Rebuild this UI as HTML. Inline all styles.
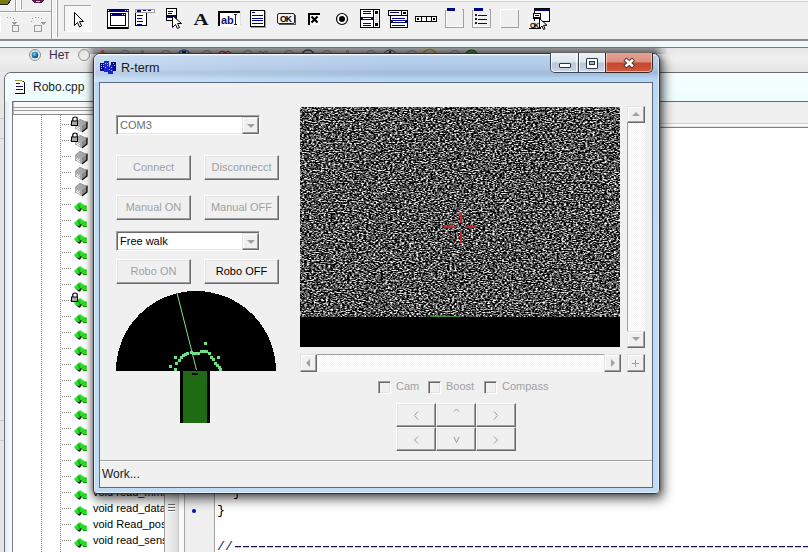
<!DOCTYPE html>
<html><head><meta charset="utf-8">
<style>
*{margin:0;padding:0;box-sizing:border-box}
html,body{width:808px;height:552px;overflow:hidden;background:#f0f0f0;font-family:"Liberation Sans",sans-serif;position:relative}
.a{position:absolute}
.btn{position:absolute;background:#f0f0f0;border-top:1px solid #fff;border-left:1px solid #fff;border-right:1px solid #696969;border-bottom:1px solid #696969;box-shadow:inset -1px -1px 0 #a0a0a0;font-size:11px;color:#a0a0a0;text-align:center;text-shadow:1px 1px 0 #fff}
.combo{position:absolute;background:#fff;border-top:1px solid #a0a0a0;border-left:1px solid #a0a0a0;border-right:1px solid #fff;border-bottom:1px solid #fff;box-shadow:inset 1px 1px 0 #696969,inset -1px -1px 0 #e3e3e3;font-size:11px}
</style></head><body>

<!-- toolbar -->
<div class="a" style="left:0;top:0;width:808px;height:40px;background:#f0f0f0"></div>
<div class="a" style="left:0;top:39px;width:808px;height:2px;background:#8a8a8a"></div>
<div class="a" style="left:0;top:41px;width:808px;height:6px;background:#eef9fb"></div>
<div class="a" style="left:0;top:47px;width:808px;height:1px;background:#7a7a7a"></div>
<div class="a" style="left:0;top:48px;width:808px;height:24px;background:#ececec"></div>


<!-- toolbar content -->
<div class="a" style="left:118px;top:0;width:690px;height:2px;background:#fbfbfb;border-bottom:1px solid #d0d0d0"></div>
<svg class="a" style="left:0;top:0" width="560" height="40" viewBox="0 0 560 40" shape-rendering="crispEdges">
<!-- left bits -->
<path d="M0 0h11l-3 4H0z" fill="#7c7a0c"/><path d="M11 0l-3 4H0" fill="none" stroke="#222" stroke-width="1"/>
<path d="M31 0h13l-3 3h-7z" fill="#5a1a4a"/><path d="M35 1h5l-1 1h-3z" fill="#e0d0e0"/>
<rect x="15" y="0" width="1" height="11" fill="#a0a0a0"/><rect x="16" y="0" width="1" height="11" fill="#fff"/>
<rect x="20" y="0" width="1" height="9" fill="#fff"/><rect x="21" y="0" width="1" height="9" fill="#a0a0a0"/>
<rect x="0" y="11" width="52" height="1" fill="#a0a0a0"/><rect x="0" y="12" width="52" height="1" fill="#fff"/>
<rect x="51" y="0" width="1" height="39" fill="#a0a0a0"/><rect x="52" y="0" width="1" height="39" fill="#fff"/>
<rect x="56" y="0" width="1" height="37" fill="#fff"/><rect x="57" y="0" width="1" height="37" fill="#a0a0a0"/>
<rect x="0" y="16" width="1" height="16" fill="#fff"/>
<!-- undo/redo -->
<g fill="#9a9a9a">
<rect x="7" y="17" width="1" height="1"/><rect x="10" y="17" width="1" height="1"/><rect x="13" y="18" width="1" height="1"/><rect x="14" y="20" width="1" height="1"/>
<path d="M12 22h5l-2.5 3z"/><rect x="12" y="25" width="7" height="7"/>
<rect x="31" y="21" width="1" height="1"/><rect x="32" y="18" width="1" height="1"/><rect x="35" y="17" width="1" height="1"/><rect x="38" y="17" width="1" height="1"/><rect x="41" y="18" width="1" height="1"/>
<path d="M41 22h5l-2.5 3z"/><rect x="34" y="25" width="8" height="7"/>
</g>
<rect x="13" y="26" width="5" height="5" fill="#efefef"/><rect x="35" y="26" width="6" height="5" fill="#efefef"/>
<!-- pointer button -->
<rect x="64" y="5" width="28" height="27" fill="#f6f6f6"/>
<rect x="64" y="5" width="28" height="1" fill="#a8a8a8"/><rect x="64" y="5" width="1" height="27" fill="#a8a8a8"/>
<rect x="64" y="31" width="28" height="1" fill="#fff"/><rect x="91" y="5" width="1" height="27" fill="#fff"/>
<path d="M74.5 12.5v13l3-3 2 4.5 2-1-2-4.5h4z" fill="#fff" stroke="#000" stroke-width="1" shape-rendering="auto"/>
<!-- window -->
<rect x="107" y="9" width="22" height="20" fill="#000"/><rect x="108" y="10" width="20" height="2" fill="#000080"/>
<rect x="108" y="10" width="1" height="1" fill="#fff"/><rect x="125" y="10" width="1" height="1" fill="#fff"/><rect x="127" y="10" width="1" height="1" fill="#fff"/>
<rect x="108" y="12" width="20" height="15" fill="#fff"/><rect x="110" y="13" width="16" height="13" fill="#000"/>
<rect x="111" y="14" width="14" height="2" fill="#000080"/><rect x="111" y="16" width="14" height="9" fill="#fff"/>
<rect x="111" y="14" width="1" height="1" fill="#fff"/><rect x="122" y="14" width="1" height="1" fill="#fff"/><rect x="124" y="14" width="1" height="1" fill="#fff"/>
<rect x="128" y="10" width="1" height="19" fill="#404040"/>
<!-- menu -->
<rect x="135" y="9" width="20" height="4" fill="#a0a0a0"/><rect x="136" y="10" width="18" height="2" fill="#fff"/>
<rect x="137" y="10" width="4" height="2" fill="#000080"/><rect x="143" y="10" width="3" height="1" fill="#000080"/><rect x="148" y="10" width="3" height="1" fill="#000080"/>
<rect x="135" y="13" width="12" height="13" fill="#000"/><rect x="136" y="13" width="10" height="12" fill="#fff"/>
<rect x="137" y="15" width="6" height="1" fill="#000080"/><rect x="137" y="18" width="5" height="1" fill="#000080"/><rect x="137" y="21" width="6" height="1" fill="#000080"/><rect x="137" y="24" width="5" height="1" fill="#000080"/>
<!-- popup -->
<rect x="166" y="8" width="11" height="13" fill="#000"/><rect x="167" y="9" width="9" height="11" fill="#fff"/>
<rect x="168" y="11" width="5" height="1" fill="#000080"/><rect x="168" y="13" width="4" height="1" fill="#000080"/><rect x="167" y="15" width="9" height="3" fill="#000080"/>
<path d="M172.5 15.5v12l3-3 2 4 2-1-2-4h4z" fill="#fff" stroke="#000" stroke-width="1" shape-rendering="auto"/>
<!-- A -->
<text x="0" y="25" transform="translate(193.5 0) scale(1.3 1)" font-family="Liberation Serif" font-weight="bold" font-size="16" fill="#111" shape-rendering="auto">A</text>
<!-- edit -->
<rect x="218" y="11" width="22" height="15" fill="#000"/><rect x="220" y="13" width="21" height="14" fill="#fff"/>
<rect x="240" y="11" width="1" height="15" fill="#e0e0e0"/>
<text x="221" y="24" font-family="Liberation Sans" font-weight="bold" font-size="11" fill="#101070" shape-rendering="auto">ab</text>
<path d="M234 14h3M235.5 14v10M234 24h3" stroke="#222" stroke-width="1"/>
<!-- memo -->
<rect x="250" y="10" width="15" height="17" fill="#000"/><rect x="251" y="11" width="13" height="15" fill="#fff"/>
<rect x="265" y="11" width="1" height="17" fill="#a0a0a0"/><rect x="251" y="27" width="15" height="1" fill="#a0a0a0"/>
<rect x="252" y="12" width="3" height="1" fill="#000080"/>
<rect x="252" y="15" width="11" height="1" fill="#000080"/><rect x="252" y="18" width="11" height="1" fill="#000080"/><rect x="252" y="20" width="11" height="1" fill="#000080"/><rect x="252" y="23" width="11" height="1" fill="#000080"/>
<!-- OK -->
<rect x="277.5" y="13.5" width="17" height="10" rx="1.5" fill="#f2f2f2" stroke="#222" stroke-width="1" shape-rendering="auto"/>
<path d="M279 24.5h16.5V15" fill="none" stroke="#555" stroke-width="1"/>
<text x="280" y="22" font-family="Liberation Sans" font-weight="bold" font-size="8.5" fill="#000" shape-rendering="auto" textLength="12">OK</text>
<!-- checkbox -->
<rect x="308" y="13" width="12" height="12" fill="#fff"/><rect x="308" y="13" width="12" height="2" fill="#000"/><rect x="308" y="13" width="2" height="12" fill="#000"/>
<path d="M311.5 16.5l6 6M317.5 16.5l-6 6" stroke="#000" stroke-width="2.2" shape-rendering="auto"/>
<!-- radio -->
<circle cx="342" cy="19" r="5.5" fill="#fff" stroke="#000" stroke-width="1.2" shape-rendering="auto"/><circle cx="342" cy="19" r="3" fill="#000" shape-rendering="auto"/>
<!-- listbox -->
<rect x="360" y="9" width="20" height="19" fill="#000"/><rect x="361" y="10" width="12" height="17" fill="#fff"/><rect x="374" y="10" width="5" height="17" fill="#fff"/>
<rect x="375" y="11" width="3" height="3" fill="#000"/><rect x="375" y="23" width="3" height="3" fill="#000"/><rect x="375" y="15" width="3" height="7" fill="#e0e0e0"/>
<rect x="363" y="11" width="8" height="1" fill="#000080"/><rect x="363" y="13" width="8" height="1" fill="#000080"/><rect x="361" y="17" width="13" height="3" fill="#000080"/><rect x="363" y="18" width="8" height="1" fill="#fff"/><rect x="363" y="23" width="8" height="1" fill="#000080"/><rect x="363" y="25" width="8" height="1" fill="#000080"/>
<!-- combobox -->
<rect x="388" y="10" width="20" height="6" fill="#000"/><rect x="389" y="11" width="12" height="4" fill="#fff"/><rect x="402" y="11" width="5" height="4" fill="#fff"/><rect x="403" y="12" width="3" height="2" fill="#000"/>
<rect x="390" y="12" width="9" height="1" fill="#000080"/>
<rect x="390" y="16" width="18" height="12" fill="#000"/><rect x="391" y="16" width="16" height="11" fill="#fff"/>
<rect x="392" y="18" width="13" height="1" fill="#000080"/><rect x="391" y="20" width="16" height="3" fill="#000080"/><rect x="393" y="21" width="12" height="1" fill="#fff"/><rect x="392" y="25" width="13" height="1" fill="#000080"/>
<!-- scrollbar -->
<rect x="415" y="16" width="22" height="6" fill="#000"/><rect x="416" y="17" width="20" height="4" fill="#fff"/>
<rect x="417" y="18" width="2" height="2" fill="#000"/><rect x="433" y="18" width="2" height="2" fill="#000"/><rect x="421" y="17" width="1" height="4" fill="#000"/><rect x="426" y="17" width="1" height="4" fill="#000"/><rect x="431" y="17" width="1" height="4" fill="#000"/>
<!-- groupbox -->
<path d="M445.5 9.5v18h18v-18h-2" fill="none" stroke="#a0a0a0"/><path d="M446.5 10.5v16h16" fill="none" stroke="#fff"/>
<rect x="447" y="8" width="8" height="3" fill="#000080"/>
<!-- radiogroup -->
<path d="M472.5 9.5v18h18v-18h-2" fill="none" stroke="#a0a0a0"/><path d="M473.5 10.5v16h16" fill="none" stroke="#fff"/>
<rect x="474" y="8" width="9" height="3" fill="#000080"/>
<rect x="475" y="14" width="2" height="2" fill="#222"/><rect x="475" y="18" width="2" height="2" fill="#222"/><rect x="475" y="22" width="2" height="2" fill="#222"/>
<rect x="478" y="15" width="9" height="1" fill="#000080"/><rect x="478" y="19" width="9" height="1" fill="#000080"/><rect x="478" y="23" width="9" height="1" fill="#000080"/>
<!-- panel -->
<path d="M500.5 27.5v-18h18" fill="none" stroke="#fff"/><path d="M500.5 27.5h18v-18" fill="none" stroke="#a0a0a0"/>
<!-- action -->
<rect x="534" y="8" width="16" height="14" fill="#000"/><rect x="535" y="9" width="14" height="2" fill="#000080"/><rect x="535" y="11" width="14" height="10" fill="#fff"/>
<rect x="533" y="13" width="8" height="6" fill="#000"/><rect x="534" y="14" width="6" height="4" fill="#fff"/><rect x="535" y="15" width="4" height="1" fill="#000080"/><rect x="534" y="17" width="6" height="1" fill="#000080"/>
<rect x="529" y="21" width="12" height="8" fill="#000"/><rect x="529" y="21" width="11" height="7" fill="#fff"/><rect x="530" y="22" width="9" height="5" fill="#eeeeee"/><text x="530" y="27.5" font-family="Liberation Sans" font-weight="bold" font-size="7" fill="#000" textLength="9" shape-rendering="auto">OK</text>
<path d="M539.5 18.5v10l2.5-2.5 1.5 3.5 1.5-.7-1.5-3.5h3.5z" fill="#fff" stroke="#000" stroke-width="1" shape-rendering="auto"/>
</svg>


<!-- radio row -->
<div class="a" style="left:0;top:48px;width:808px;height:24px;background:linear-gradient(#e6e6e6,#f0f0f0 40%,#e4e4e4)"></div>
<div class="a" style="left:84px;top:48px;width:584px;height:6px;background:linear-gradient(90deg,rgba(140,140,140,.0),rgba(140,140,140,.8) 10px,rgba(140,140,140,.8) 570px,rgba(140,140,140,0))"></div>
<svg class="a" style="left:0;top:48px" width="808" height="24" viewBox="0 48 808 24">
<defs><radialGradient id="rg1" cx=".4" cy=".35" r=".7"><stop offset="0" stop-color="#8fd0f0"/><stop offset=".5" stop-color="#1f82b8"/><stop offset="1" stop-color="#0d3f66"/></radialGradient>
<linearGradient id="rg0" x1="0" y1="0" x2="1" y2="1"><stop offset="0" stop-color="#d8d8d8"/><stop offset="1" stop-color="#fafafa"/></linearGradient></defs>
<circle cx="35" cy="55" r="5.5" fill="url(#rg0)" stroke="#8e8f8f" stroke-width="1"/>
<circle cx="35" cy="55" r="3.3" fill="url(#rg1)"/>
<circle cx="84" cy="55" r="5.5" fill="url(#rg0)" stroke="#8e8f8f" stroke-width="1"/>
<path d="M100 54l2.5-4 2.5 4M101 52h3" fill="none" stroke="#c03838" stroke-width="1"/>
<g fill="none" stroke="#6a6a6a" stroke-width="1">
<path d="M120 55a5 4.5 0 0 1 10 0M140.5 55l2-5 2 5M161 55a5 4.5 0 0 1 10 0M202 55a5 4.5 0 0 1 10 0M243 55a5 4.5 0 0 1 10 0M284 55a5 4.5 0 0 1 10 0M322 55a5 4.5 0 0 1 10 0M345.5 55l2-5 2 5M366 55a5 4.5 0 0 1 10 0M407 55a5 4.5 0 0 1 10 0M450 55a5 4.5 0 0 1 10 0"/>
<path d="M258 55l2-4 3 2 3-2 2 2 2 2"/>
</g>
<path d="M178 55a6 5 0 0 1 12 0" fill="none" stroke="#28508a" stroke-width="1.4"/><rect x="182" y="51" width="4" height="3" fill="#1a1a2a"/>
<path d="M302 55a6 5 0 0 1 12 0" fill="none" stroke="#303848" stroke-width="1.4"/>
<path d="M384 55a6 5 0 0 1 12 0" fill="none" stroke="#303848" stroke-width="1"/><rect x="389" y="51" width="2" height="3" fill="#202020"/>
<path d="M219 55a3 3 0 0 1 6-1a3 3 0 0 1 6 1" fill="none" stroke="#9a2030" stroke-width="1.2"/>
<path d="M423 55a6.5 5.5 0 0 1 13 0" fill="none" stroke="#8a7a10" stroke-width="1.6"/>
<path d="M465 56a6.5 6 0 0 1 13 0z" fill="#3a7a3a" stroke="#1a3a1a" stroke-width="1"/>
</svg>
<div class="a" style="left:49px;top:48px;font-size:12px;color:#3a2c48">Нет</div>

<!-- left behind window -->
<div class="a" style="left:0;top:73px;width:5px;height:479px;background:#e6e6e6"></div><div class="a" style="left:0;top:118px;width:4px;height:1px;background:#c8c8c8"></div><div class="a" style="left:0;top:138px;width:4px;height:1px;background:#c8c8c8"></div><div class="a" style="left:0;top:420px;width:4px;height:1px;background:#c8c8c8"></div><div class="a" style="left:0;top:440px;width:4px;height:1px;background:#c8c8c8"></div>
<!-- MDI child window -->
<div class="a" style="left:4px;top:72px;width:820px;height:500px;border-left:1px solid #707070;border-top:1px solid #6a6a6a;border-top-left-radius:7px;background:linear-gradient(90deg,#dfeefa,#f3fbff 6px,#f3fbff 8px,#e4f0fb)"></div>
<div class="a" style="left:5px;top:73px;width:810px;height:28px;border-top-left-radius:6px;background:linear-gradient(#f4feff,#effdff)"></div>
<!-- doc icon -->
<svg class="a" style="left:10px;top:76px" width="20" height="22" viewBox="10 76 20 22" shape-rendering="crispEdges">
<rect x="15" y="81" width="9" height="12" fill="#fff"/>
<rect x="15" y="80" width="7" height="1" fill="#9c9c3c"/><rect x="22" y="81" width="1" height="1" fill="#9c9c3c"/><rect x="23" y="81" width="1" height="1" fill="#222"/><rect x="24" y="82" width="1" height="1" fill="#222"/>
<rect x="24" y="83" width="1" height="11" fill="#000"/><rect x="15" y="93" width="10" height="1" fill="#000"/>
<rect x="16" y="83" width="4" height="1" fill="#16165a"/><rect x="16" y="86" width="7" height="1" fill="#16165a"/><rect x="16" y="89" width="7" height="1" fill="#16165a"/>
</svg>
<div class="a" style="left:33px;top:80px;font-size:12px;color:#1e1e1e">Robo.cpp</div>
<!-- editor header right -->
<div class="a" style="left:12px;top:101px;width:796px;height:1px;background:#6a6a6a"></div>
<div class="a" style="left:178px;top:102px;width:630px;height:21px;background:#f0f0f0"></div>
<div class="a" style="left:178px;top:123px;width:630px;height:4px;background:linear-gradient(#d0d0d0 1px,#fbfbfb 1px,#fbfbfb 3px,#e4e4e4 3px)"></div>
<div class="a" style="left:178px;top:127px;width:630px;height:1px;background:#808080"></div>
<div class="a" style="left:215px;top:128px;width:593px;height:424px;background:#fff"></div>
<!-- tree panel -->
<div class="a" style="left:12px;top:101px;width:160px;height:460px;background:#fff;border-left:1px solid #7a7a7a;border-top:1px solid #6a6a6a"></div>
<div class="a" style="left:13px;top:102px;width:160px;height:13px;background:#f8f8f8;border-bottom:1px solid #8a8a8a;border-left:1px solid #b8b8b8"></div>
<div class="a" style="left:13px;top:107px;width:160px;height:1px;background:#9a9a9a"></div>
<div class="a" style="left:13px;top:110px;width:160px;height:1px;background:#9a9a9a"></div>
<!-- tree content -->
<svg class="a" style="left:13px;top:115px" width="151" height="437" viewBox="13 115 151 437" shape-rendering="crispEdges">

<path d="M41.5 115V552M60.5 115V552" stroke="#808080" stroke-dasharray="1 1"/>
<path d="M62 124.5H71" stroke="#808080" stroke-dasharray="1 1"/>
<g transform="translate(0 0)" shape-rendering="auto"><path d="M75 123l5-4 7 3v6l-5 4-7-3z" fill="#ababab"/><path d="M82 126l5-4v6l-5 4z" fill="#8a8a8a"/><path d="M75.5 123l4.5-3.5 7 3" fill="none" stroke="#999" stroke-width="1"/><path d="M87 121.5v6.5l-5 4" fill="none" stroke="#111" stroke-width="1.3"/><path d="M76 127l4 3M80 127l-4 3M77 126l1 1" stroke="#f4f4f4" stroke-width="1"/></g>
<g transform="translate(0 0)" shape-rendering="auto"><path d="M72.8 121v-2.2a2.2 1.8 0 0 1 4.4 0V121" fill="none" stroke="#000" stroke-width="1.2"/><rect x="71.5" y="121" width="6" height="4.5" fill="#aaa" stroke="#000" stroke-width="1"/></g>
<path d="M62 140.5H71" stroke="#808080" stroke-dasharray="1 1"/>
<g transform="translate(0 16)" shape-rendering="auto"><path d="M75 123l5-4 7 3v6l-5 4-7-3z" fill="#ababab"/><path d="M82 126l5-4v6l-5 4z" fill="#8a8a8a"/><path d="M75.5 123l4.5-3.5 7 3" fill="none" stroke="#999" stroke-width="1"/><path d="M87 121.5v6.5l-5 4" fill="none" stroke="#111" stroke-width="1.3"/><path d="M76 127l4 3M80 127l-4 3M77 126l1 1" stroke="#f4f4f4" stroke-width="1"/></g>
<g transform="translate(0 16)" shape-rendering="auto"><path d="M72.8 121v-2.2a2.2 1.8 0 0 1 4.4 0V121" fill="none" stroke="#000" stroke-width="1.2"/><rect x="71.5" y="121" width="6" height="4.5" fill="#aaa" stroke="#000" stroke-width="1"/></g>
<path d="M62 156.5H71" stroke="#808080" stroke-dasharray="1 1"/>
<g transform="translate(0 32)" shape-rendering="auto"><path d="M75 123l5-4 7 3v6l-5 4-7-3z" fill="#ababab"/><path d="M82 126l5-4v6l-5 4z" fill="#8a8a8a"/><path d="M75.5 123l4.5-3.5 7 3" fill="none" stroke="#999" stroke-width="1"/><path d="M87 121.5v6.5l-5 4" fill="none" stroke="#111" stroke-width="1.3"/><path d="M76 127l4 3M80 127l-4 3M77 126l1 1" stroke="#f4f4f4" stroke-width="1"/></g>
<path d="M62 172.5H71" stroke="#808080" stroke-dasharray="1 1"/>
<g transform="translate(0 48)" shape-rendering="auto"><path d="M75 123l5-4 7 3v6l-5 4-7-3z" fill="#ababab"/><path d="M82 126l5-4v6l-5 4z" fill="#8a8a8a"/><path d="M75.5 123l4.5-3.5 7 3" fill="none" stroke="#999" stroke-width="1"/><path d="M87 121.5v6.5l-5 4" fill="none" stroke="#111" stroke-width="1.3"/><path d="M76 127l4 3M80 127l-4 3M77 126l1 1" stroke="#f4f4f4" stroke-width="1"/></g>
<path d="M62 188.5H71" stroke="#808080" stroke-dasharray="1 1"/>
<g transform="translate(0 64)" shape-rendering="auto"><path d="M75 123l5-4 7 3v6l-5 4-7-3z" fill="#ababab"/><path d="M82 126l5-4v6l-5 4z" fill="#8a8a8a"/><path d="M75.5 123l4.5-3.5 7 3" fill="none" stroke="#999" stroke-width="1"/><path d="M87 121.5v6.5l-5 4" fill="none" stroke="#111" stroke-width="1.3"/><path d="M76 127l4 3M80 127l-4 3M77 126l1 1" stroke="#f4f4f4" stroke-width="1"/></g>
<path d="M62 204.5H71" stroke="#808080" stroke-dasharray="1 1"/>
<g transform="translate(0 -304)" shape-rendering="auto"><path d="M74 511L76.7 508.5 78.2 507 80 506 84 509 86.8 509.5V514.8H82.5L81.5 512.5 80 514.5H78.7Z" fill="#22dd22"/><path d="M74 511.3L78.6 515.6H80.2L81.8 513 80.6 511.8 79.2 514 77.6 513.8Z" fill="#0c140c"/><path d="M74.6 510.6L77.4 508M78.6 507L80.2 506.2 83.6 508.8" fill="none" stroke="#8ef68e" stroke-width=".9"/><path d="M78.6 508.2L79.8 512.4" stroke="#128a12" stroke-width="1"/><path d="M83 514.5h3.6" stroke="#149a14" stroke-width="1"/></g>
<path d="M62 220.5H71" stroke="#808080" stroke-dasharray="1 1"/>
<g transform="translate(0 -288)" shape-rendering="auto"><path d="M74 511L76.7 508.5 78.2 507 80 506 84 509 86.8 509.5V514.8H82.5L81.5 512.5 80 514.5H78.7Z" fill="#22dd22"/><path d="M74 511.3L78.6 515.6H80.2L81.8 513 80.6 511.8 79.2 514 77.6 513.8Z" fill="#0c140c"/><path d="M74.6 510.6L77.4 508M78.6 507L80.2 506.2 83.6 508.8" fill="none" stroke="#8ef68e" stroke-width=".9"/><path d="M78.6 508.2L79.8 512.4" stroke="#128a12" stroke-width="1"/><path d="M83 514.5h3.6" stroke="#149a14" stroke-width="1"/></g>
<path d="M62 236.5H71" stroke="#808080" stroke-dasharray="1 1"/>
<g transform="translate(0 -272)" shape-rendering="auto"><path d="M74 511L76.7 508.5 78.2 507 80 506 84 509 86.8 509.5V514.8H82.5L81.5 512.5 80 514.5H78.7Z" fill="#22dd22"/><path d="M74 511.3L78.6 515.6H80.2L81.8 513 80.6 511.8 79.2 514 77.6 513.8Z" fill="#0c140c"/><path d="M74.6 510.6L77.4 508M78.6 507L80.2 506.2 83.6 508.8" fill="none" stroke="#8ef68e" stroke-width=".9"/><path d="M78.6 508.2L79.8 512.4" stroke="#128a12" stroke-width="1"/><path d="M83 514.5h3.6" stroke="#149a14" stroke-width="1"/></g>
<path d="M62 252.5H71" stroke="#808080" stroke-dasharray="1 1"/>
<g transform="translate(0 -256)" shape-rendering="auto"><path d="M74 511L76.7 508.5 78.2 507 80 506 84 509 86.8 509.5V514.8H82.5L81.5 512.5 80 514.5H78.7Z" fill="#22dd22"/><path d="M74 511.3L78.6 515.6H80.2L81.8 513 80.6 511.8 79.2 514 77.6 513.8Z" fill="#0c140c"/><path d="M74.6 510.6L77.4 508M78.6 507L80.2 506.2 83.6 508.8" fill="none" stroke="#8ef68e" stroke-width=".9"/><path d="M78.6 508.2L79.8 512.4" stroke="#128a12" stroke-width="1"/><path d="M83 514.5h3.6" stroke="#149a14" stroke-width="1"/></g>
<path d="M62 268.5H71" stroke="#808080" stroke-dasharray="1 1"/>
<g transform="translate(0 -240)" shape-rendering="auto"><path d="M74 511L76.7 508.5 78.2 507 80 506 84 509 86.8 509.5V514.8H82.5L81.5 512.5 80 514.5H78.7Z" fill="#22dd22"/><path d="M74 511.3L78.6 515.6H80.2L81.8 513 80.6 511.8 79.2 514 77.6 513.8Z" fill="#0c140c"/><path d="M74.6 510.6L77.4 508M78.6 507L80.2 506.2 83.6 508.8" fill="none" stroke="#8ef68e" stroke-width=".9"/><path d="M78.6 508.2L79.8 512.4" stroke="#128a12" stroke-width="1"/><path d="M83 514.5h3.6" stroke="#149a14" stroke-width="1"/></g>
<path d="M62 284.5H71" stroke="#808080" stroke-dasharray="1 1"/>
<g transform="translate(0 -224)" shape-rendering="auto"><path d="M74 511L76.7 508.5 78.2 507 80 506 84 509 86.8 509.5V514.8H82.5L81.5 512.5 80 514.5H78.7Z" fill="#22dd22"/><path d="M74 511.3L78.6 515.6H80.2L81.8 513 80.6 511.8 79.2 514 77.6 513.8Z" fill="#0c140c"/><path d="M74.6 510.6L77.4 508M78.6 507L80.2 506.2 83.6 508.8" fill="none" stroke="#8ef68e" stroke-width=".9"/><path d="M78.6 508.2L79.8 512.4" stroke="#128a12" stroke-width="1"/><path d="M83 514.5h3.6" stroke="#149a14" stroke-width="1"/></g>
<path d="M62 300.5H71" stroke="#808080" stroke-dasharray="1 1"/>
<g transform="translate(0 -208)" shape-rendering="auto"><path d="M74 511L76.7 508.5 78.2 507 80 506 84 509 86.8 509.5V514.8H82.5L81.5 512.5 80 514.5H78.7Z" fill="#22dd22"/><path d="M74 511.3L78.6 515.6H80.2L81.8 513 80.6 511.8 79.2 514 77.6 513.8Z" fill="#0c140c"/><path d="M74.6 510.6L77.4 508M78.6 507L80.2 506.2 83.6 508.8" fill="none" stroke="#8ef68e" stroke-width=".9"/><path d="M78.6 508.2L79.8 512.4" stroke="#128a12" stroke-width="1"/><path d="M83 514.5h3.6" stroke="#149a14" stroke-width="1"/></g>
<g transform="translate(0 176)" shape-rendering="auto"><path d="M72.8 121v-2.2a2.2 1.8 0 0 1 4.4 0V121" fill="none" stroke="#000" stroke-width="1.2"/><rect x="71.5" y="121" width="6" height="4.5" fill="#aaa" stroke="#000" stroke-width="1"/></g>
<path d="M62 316.5H71" stroke="#808080" stroke-dasharray="1 1"/>
<g transform="translate(0 -192)" shape-rendering="auto"><path d="M74 511L76.7 508.5 78.2 507 80 506 84 509 86.8 509.5V514.8H82.5L81.5 512.5 80 514.5H78.7Z" fill="#22dd22"/><path d="M74 511.3L78.6 515.6H80.2L81.8 513 80.6 511.8 79.2 514 77.6 513.8Z" fill="#0c140c"/><path d="M74.6 510.6L77.4 508M78.6 507L80.2 506.2 83.6 508.8" fill="none" stroke="#8ef68e" stroke-width=".9"/><path d="M78.6 508.2L79.8 512.4" stroke="#128a12" stroke-width="1"/><path d="M83 514.5h3.6" stroke="#149a14" stroke-width="1"/></g>
<path d="M62 332.5H71" stroke="#808080" stroke-dasharray="1 1"/>
<g transform="translate(0 -176)" shape-rendering="auto"><path d="M74 511L76.7 508.5 78.2 507 80 506 84 509 86.8 509.5V514.8H82.5L81.5 512.5 80 514.5H78.7Z" fill="#22dd22"/><path d="M74 511.3L78.6 515.6H80.2L81.8 513 80.6 511.8 79.2 514 77.6 513.8Z" fill="#0c140c"/><path d="M74.6 510.6L77.4 508M78.6 507L80.2 506.2 83.6 508.8" fill="none" stroke="#8ef68e" stroke-width=".9"/><path d="M78.6 508.2L79.8 512.4" stroke="#128a12" stroke-width="1"/><path d="M83 514.5h3.6" stroke="#149a14" stroke-width="1"/></g>
<path d="M62 348.5H71" stroke="#808080" stroke-dasharray="1 1"/>
<g transform="translate(0 -160)" shape-rendering="auto"><path d="M74 511L76.7 508.5 78.2 507 80 506 84 509 86.8 509.5V514.8H82.5L81.5 512.5 80 514.5H78.7Z" fill="#22dd22"/><path d="M74 511.3L78.6 515.6H80.2L81.8 513 80.6 511.8 79.2 514 77.6 513.8Z" fill="#0c140c"/><path d="M74.6 510.6L77.4 508M78.6 507L80.2 506.2 83.6 508.8" fill="none" stroke="#8ef68e" stroke-width=".9"/><path d="M78.6 508.2L79.8 512.4" stroke="#128a12" stroke-width="1"/><path d="M83 514.5h3.6" stroke="#149a14" stroke-width="1"/></g>
<path d="M62 364.5H71" stroke="#808080" stroke-dasharray="1 1"/>
<g transform="translate(0 -144)" shape-rendering="auto"><path d="M74 511L76.7 508.5 78.2 507 80 506 84 509 86.8 509.5V514.8H82.5L81.5 512.5 80 514.5H78.7Z" fill="#22dd22"/><path d="M74 511.3L78.6 515.6H80.2L81.8 513 80.6 511.8 79.2 514 77.6 513.8Z" fill="#0c140c"/><path d="M74.6 510.6L77.4 508M78.6 507L80.2 506.2 83.6 508.8" fill="none" stroke="#8ef68e" stroke-width=".9"/><path d="M78.6 508.2L79.8 512.4" stroke="#128a12" stroke-width="1"/><path d="M83 514.5h3.6" stroke="#149a14" stroke-width="1"/></g>
<path d="M62 380.5H71" stroke="#808080" stroke-dasharray="1 1"/>
<g transform="translate(0 -128)" shape-rendering="auto"><path d="M74 511L76.7 508.5 78.2 507 80 506 84 509 86.8 509.5V514.8H82.5L81.5 512.5 80 514.5H78.7Z" fill="#22dd22"/><path d="M74 511.3L78.6 515.6H80.2L81.8 513 80.6 511.8 79.2 514 77.6 513.8Z" fill="#0c140c"/><path d="M74.6 510.6L77.4 508M78.6 507L80.2 506.2 83.6 508.8" fill="none" stroke="#8ef68e" stroke-width=".9"/><path d="M78.6 508.2L79.8 512.4" stroke="#128a12" stroke-width="1"/><path d="M83 514.5h3.6" stroke="#149a14" stroke-width="1"/></g>
<path d="M62 396.5H71" stroke="#808080" stroke-dasharray="1 1"/>
<g transform="translate(0 -112)" shape-rendering="auto"><path d="M74 511L76.7 508.5 78.2 507 80 506 84 509 86.8 509.5V514.8H82.5L81.5 512.5 80 514.5H78.7Z" fill="#22dd22"/><path d="M74 511.3L78.6 515.6H80.2L81.8 513 80.6 511.8 79.2 514 77.6 513.8Z" fill="#0c140c"/><path d="M74.6 510.6L77.4 508M78.6 507L80.2 506.2 83.6 508.8" fill="none" stroke="#8ef68e" stroke-width=".9"/><path d="M78.6 508.2L79.8 512.4" stroke="#128a12" stroke-width="1"/><path d="M83 514.5h3.6" stroke="#149a14" stroke-width="1"/></g>
<path d="M62 412.5H71" stroke="#808080" stroke-dasharray="1 1"/>
<g transform="translate(0 -96)" shape-rendering="auto"><path d="M74 511L76.7 508.5 78.2 507 80 506 84 509 86.8 509.5V514.8H82.5L81.5 512.5 80 514.5H78.7Z" fill="#22dd22"/><path d="M74 511.3L78.6 515.6H80.2L81.8 513 80.6 511.8 79.2 514 77.6 513.8Z" fill="#0c140c"/><path d="M74.6 510.6L77.4 508M78.6 507L80.2 506.2 83.6 508.8" fill="none" stroke="#8ef68e" stroke-width=".9"/><path d="M78.6 508.2L79.8 512.4" stroke="#128a12" stroke-width="1"/><path d="M83 514.5h3.6" stroke="#149a14" stroke-width="1"/></g>
<path d="M62 428.5H71" stroke="#808080" stroke-dasharray="1 1"/>
<g transform="translate(0 -80)" shape-rendering="auto"><path d="M74 511L76.7 508.5 78.2 507 80 506 84 509 86.8 509.5V514.8H82.5L81.5 512.5 80 514.5H78.7Z" fill="#22dd22"/><path d="M74 511.3L78.6 515.6H80.2L81.8 513 80.6 511.8 79.2 514 77.6 513.8Z" fill="#0c140c"/><path d="M74.6 510.6L77.4 508M78.6 507L80.2 506.2 83.6 508.8" fill="none" stroke="#8ef68e" stroke-width=".9"/><path d="M78.6 508.2L79.8 512.4" stroke="#128a12" stroke-width="1"/><path d="M83 514.5h3.6" stroke="#149a14" stroke-width="1"/></g>
<path d="M62 444.5H71" stroke="#808080" stroke-dasharray="1 1"/>
<g transform="translate(0 -64)" shape-rendering="auto"><path d="M74 511L76.7 508.5 78.2 507 80 506 84 509 86.8 509.5V514.8H82.5L81.5 512.5 80 514.5H78.7Z" fill="#22dd22"/><path d="M74 511.3L78.6 515.6H80.2L81.8 513 80.6 511.8 79.2 514 77.6 513.8Z" fill="#0c140c"/><path d="M74.6 510.6L77.4 508M78.6 507L80.2 506.2 83.6 508.8" fill="none" stroke="#8ef68e" stroke-width=".9"/><path d="M78.6 508.2L79.8 512.4" stroke="#128a12" stroke-width="1"/><path d="M83 514.5h3.6" stroke="#149a14" stroke-width="1"/></g>
<path d="M62 460.5H71" stroke="#808080" stroke-dasharray="1 1"/>
<g transform="translate(0 -48)" shape-rendering="auto"><path d="M74 511L76.7 508.5 78.2 507 80 506 84 509 86.8 509.5V514.8H82.5L81.5 512.5 80 514.5H78.7Z" fill="#22dd22"/><path d="M74 511.3L78.6 515.6H80.2L81.8 513 80.6 511.8 79.2 514 77.6 513.8Z" fill="#0c140c"/><path d="M74.6 510.6L77.4 508M78.6 507L80.2 506.2 83.6 508.8" fill="none" stroke="#8ef68e" stroke-width=".9"/><path d="M78.6 508.2L79.8 512.4" stroke="#128a12" stroke-width="1"/><path d="M83 514.5h3.6" stroke="#149a14" stroke-width="1"/></g>
<path d="M62 476.5H71" stroke="#808080" stroke-dasharray="1 1"/>
<g transform="translate(0 -32)" shape-rendering="auto"><path d="M74 511L76.7 508.5 78.2 507 80 506 84 509 86.8 509.5V514.8H82.5L81.5 512.5 80 514.5H78.7Z" fill="#22dd22"/><path d="M74 511.3L78.6 515.6H80.2L81.8 513 80.6 511.8 79.2 514 77.6 513.8Z" fill="#0c140c"/><path d="M74.6 510.6L77.4 508M78.6 507L80.2 506.2 83.6 508.8" fill="none" stroke="#8ef68e" stroke-width=".9"/><path d="M78.6 508.2L79.8 512.4" stroke="#128a12" stroke-width="1"/><path d="M83 514.5h3.6" stroke="#149a14" stroke-width="1"/></g>
<path d="M62 492.5H71" stroke="#808080" stroke-dasharray="1 1"/>
<g transform="translate(0 -16)" shape-rendering="auto"><path d="M74 511L76.7 508.5 78.2 507 80 506 84 509 86.8 509.5V514.8H82.5L81.5 512.5 80 514.5H78.7Z" fill="#22dd22"/><path d="M74 511.3L78.6 515.6H80.2L81.8 513 80.6 511.8 79.2 514 77.6 513.8Z" fill="#0c140c"/><path d="M74.6 510.6L77.4 508M78.6 507L80.2 506.2 83.6 508.8" fill="none" stroke="#8ef68e" stroke-width=".9"/><path d="M78.6 508.2L79.8 512.4" stroke="#128a12" stroke-width="1"/><path d="M83 514.5h3.6" stroke="#149a14" stroke-width="1"/></g>
<path d="M62 508.5H71" stroke="#808080" stroke-dasharray="1 1"/>
<g transform="translate(0 0)" shape-rendering="auto"><path d="M74 511L76.7 508.5 78.2 507 80 506 84 509 86.8 509.5V514.8H82.5L81.5 512.5 80 514.5H78.7Z" fill="#22dd22"/><path d="M74 511.3L78.6 515.6H80.2L81.8 513 80.6 511.8 79.2 514 77.6 513.8Z" fill="#0c140c"/><path d="M74.6 510.6L77.4 508M78.6 507L80.2 506.2 83.6 508.8" fill="none" stroke="#8ef68e" stroke-width=".9"/><path d="M78.6 508.2L79.8 512.4" stroke="#128a12" stroke-width="1"/><path d="M83 514.5h3.6" stroke="#149a14" stroke-width="1"/></g>
<path d="M62 524.5H71" stroke="#808080" stroke-dasharray="1 1"/>
<g transform="translate(0 16)" shape-rendering="auto"><path d="M74 511L76.7 508.5 78.2 507 80 506 84 509 86.8 509.5V514.8H82.5L81.5 512.5 80 514.5H78.7Z" fill="#22dd22"/><path d="M74 511.3L78.6 515.6H80.2L81.8 513 80.6 511.8 79.2 514 77.6 513.8Z" fill="#0c140c"/><path d="M74.6 510.6L77.4 508M78.6 507L80.2 506.2 83.6 508.8" fill="none" stroke="#8ef68e" stroke-width=".9"/><path d="M78.6 508.2L79.8 512.4" stroke="#128a12" stroke-width="1"/><path d="M83 514.5h3.6" stroke="#149a14" stroke-width="1"/></g>
<path d="M62 540.5H71" stroke="#808080" stroke-dasharray="1 1"/>
<g transform="translate(0 32)" shape-rendering="auto"><path d="M74 511L76.7 508.5 78.2 507 80 506 84 509 86.8 509.5V514.8H82.5L81.5 512.5 80 514.5H78.7Z" fill="#22dd22"/><path d="M74 511.3L78.6 515.6H80.2L81.8 513 80.6 511.8 79.2 514 77.6 513.8Z" fill="#0c140c"/><path d="M74.6 510.6L77.4 508M78.6 507L80.2 506.2 83.6 508.8" fill="none" stroke="#8ef68e" stroke-width=".9"/><path d="M78.6 508.2L79.8 512.4" stroke="#128a12" stroke-width="1"/><path d="M83 514.5h3.6" stroke="#149a14" stroke-width="1"/></g>
<path d="M62 556.5H71" stroke="#808080" stroke-dasharray="1 1"/>
<g transform="translate(0 48)" shape-rendering="auto"><path d="M74 511L76.7 508.5 78.2 507 80 506 84 509 86.8 509.5V514.8H82.5L81.5 512.5 80 514.5H78.7Z" fill="#22dd22"/><path d="M74 511.3L78.6 515.6H80.2L81.8 513 80.6 511.8 79.2 514 77.6 513.8Z" fill="#0c140c"/><path d="M74.6 510.6L77.4 508M78.6 507L80.2 506.2 83.6 508.8" fill="none" stroke="#8ef68e" stroke-width=".9"/><path d="M78.6 508.2L79.8 512.4" stroke="#128a12" stroke-width="1"/><path d="M83 514.5h3.6" stroke="#149a14" stroke-width="1"/></g>
</svg>
<div class="a" style="left:13px;top:115px;width:151px;height:437px;overflow:hidden">
<div class="a" style="left:80px;top:371px;font-size:11px;color:#000;white-space:nowrap">void read_mmm</div>
<div class="a" style="left:80px;top:387px;font-size:11px;color:#000;white-space:nowrap">void read_data</div>
<div class="a" style="left:80px;top:403px;font-size:11px;color:#000;white-space:nowrap">void Read_pos</div>
<div class="a" style="left:80px;top:419px;font-size:11px;color:#000;white-space:nowrap">void read_sens</div>
<div class="a" style="left:80px;top:435px;font-size:11px;color:#000;white-space:nowrap">void Read_all</div>
</div>
<!-- splitter and gutter -->
<div class="a" style="left:164px;top:101px;width:14px;height:460px;background:linear-gradient(90deg,#f4f4f4,#dcdcdc);border-left:1px solid #a0a0a0"></div>
<div class="a" style="left:178px;top:128px;width:7px;height:460px;background:#fafafa;border-left:1px solid #c8c8c8;border-right:1px solid #a8a8a8"></div>
<div class="a" style="left:185px;top:128px;width:30px;height:460px;background:#efefef;border-right:1px solid #a0a0a0"></div>


<!-- code editor content -->
<div class="a" style="left:168px;top:504px;width:7px;height:2px;background:linear-gradient(#6a6a6a 1px,#fff 1px)"></div>
<div class="a" style="left:168px;top:507px;width:7px;height:2px;background:linear-gradient(#6a6a6a 1px,#fff 1px)"></div>
<div class="a" style="left:168px;top:510px;width:7px;height:2px;background:linear-gradient(#6a6a6a 1px,#fff 1px)"></div>
<div class="a" style="left:192px;top:509px;width:4px;height:4px;border-radius:2px;background:#0010c0"></div>
<div class="a" id="br1" style="left:233px;top:485px;font-family:'Liberation Mono',monospace;font-size:13.33px;color:#000">}</div>
<div class="a" id="br2" style="left:217px;top:503px;font-family:'Liberation Mono',monospace;font-size:13.33px;color:#000">}</div>
<div class="a" id="cm" style="left:217px;top:539px;font-family:'Liberation Mono',monospace;font-size:13.33px;color:#1c1c78;white-space:nowrap">//</div>
<div class="a" style="left:235px;top:546px;width:573px;height:1px;background:repeating-linear-gradient(90deg,#14144a 0 6px,transparent 6px 8px)"></div>
<div class="a" style="left:235px;top:547px;width:573px;height:1px;background:repeating-linear-gradient(90deg,rgba(20,20,74,.25) 0 6px,transparent 6px 8px)"></div>

<!-- dialog -->
<div class="a" id="dlg" style="left:93px;top:53px;width:567px;height:441px;border:1px solid #2e3440;border-radius:7px 7px 5px 5px;background:linear-gradient(#dde9f6 0,#dde9f6 1px,#b9d1ed 2px,#afc9e8 12px,#aac3e1 16px,#a2bbd7 18px,#a6c1de 21px,#b2d2f2 24px,#b8d8f6 28px,#bcd9f4 40px,#c0dbf5);box-shadow:0 0 5px 1px rgba(0,0,0,.35),2px 4px 11px 2px rgba(0,0,0,.55)"></div>
<div class="a" style="left:94px;top:54px;width:565px;height:439px;border:1px solid rgba(255,255,255,.55);border-radius:6px 6px 2px 2px"></div>
<div class="a" style="left:94px;top:54px;width:456px;height:28px;border-top-left-radius:6px;background:linear-gradient(90deg,rgba(255,255,255,.28),rgba(255,255,255,.12) 150px,rgba(255,255,255,0) 300px)"></div>
<!-- title icon -->
<svg class="a" style="left:98px;top:58px" width="22" height="20" viewBox="98 58 22 20" shape-rendering="crispEdges">
<rect x="100" y="63" width="5" height="8" fill="#0a0a80"/>
<rect x="111" y="62" width="5" height="9" fill="#0a0a78"/>
<rect x="104" y="61" width="5" height="11" fill="#1a2ad0"/>
<rect x="108" y="65" width="5" height="9" fill="#1424c8"/>
<g fill="#a8c4ff"><rect x="101" y="64" width="1" height="1"/><rect x="103" y="64" width="1" height="1"/><rect x="101" y="66" width="1" height="1"/><rect x="103" y="66" width="1" height="1"/><rect x="101" y="68" width="1" height="1"/>
<rect x="105" y="63" width="1" height="1"/><rect x="107" y="63" width="1" height="1"/><rect x="105" y="67" width="1" height="1"/><rect x="107" y="65" width="1" height="1"/>
<rect x="109" y="66" width="1" height="1"/><rect x="111" y="67" width="1" height="1"/><rect x="109" y="69" width="1" height="1"/><rect x="111" y="70" width="1" height="1"/>
<rect x="113" y="63" width="1" height="1"/><rect x="114" y="65" width="1" height="1"/></g>
<rect x="109" y="65" width="1" height="1" fill="#60e0f0"/>
</svg>
<div class="a" style="left:121px;top:61px;font-size:12.6px;color:#1a1a1a">R-term</div>
<!-- caption buttons -->
<div class="a" style="left:550px;top:53px;width:56px;height:20px;border:1px solid #3a4656;border-top:none;border-radius:0 0 0 5px;background:linear-gradient(#eef2f7,#dde5ee 9px,#b7c6d8 10px,#c9d6e4)"></div>
<div class="a" style="left:551px;top:54px;width:26px;height:18px;border:1px solid rgba(255,255,255,.7);border-top:none;border-radius:0 0 0 4px"></div>
<div class="a" style="left:578px;top:53px;width:1px;height:19px;background:#3a4656"></div>
<div class="a" style="left:579px;top:54px;width:26px;height:18px;border:1px solid rgba(255,255,255,.7);border-top:none"></div>
<div class="a" style="left:559px;top:63px;width:12px;height:5px;background:#fff;border:1px solid #2d3642;border-radius:1px"></div>
<div class="a" style="left:586px;top:58px;width:12px;height:11px;background:#fff;border:1px solid #2d3642;border-radius:1px"></div>
<div class="a" style="left:589px;top:61px;width:6px;height:4px;background:#aab6c4;border:1px solid #2d3642"></div>
<div class="a" style="left:605px;top:53px;width:48px;height:20px;border:1px solid #3a2420;border-top:none;border-radius:0 0 5px 0;background:linear-gradient(#e6a394,#dc8e7e 9px,#c4462e 10px,#cf5a40)"></div>
<div class="a" style="left:606px;top:54px;width:46px;height:18px;border:1px solid rgba(255,230,220,.6);border-top:none;border-radius:0 0 4px 0"></div>
<svg class="a" style="left:621px;top:56px" width="16" height="13" viewBox="0 0 16 13">
<path d="M5.5 4.5L11 9.5M11 4.5L5.5 9.5" stroke="#4a3434" stroke-width="4.4" stroke-linecap="square"/>
<path d="M5.5 4.5L11 9.5M11 4.5L5.5 9.5" stroke="#fff" stroke-width="2.6" stroke-linecap="square"/>
</svg>
<!-- client area -->
<div class="a" style="left:99px;top:82px;width:554px;height:406px;background:#f0f0f0;border:1px solid #5a6a7c"></div>

<!-- controls -->
<style>
.b3{position:absolute;background:#f0f0f0;border-top:1px solid #fff;border-left:1px solid #fff;border-right:1px solid #696969;border-bottom:1px solid #696969;box-shadow:inset -1px -1px 0 #a0a0a0,inset 1px 1px 0 #e3e3e3;font-size:11px;color:#a0a0a0;text-align:center;line-height:23px;white-space:nowrap}
.b3.en{color:#000}
.cb{position:absolute;background:#fff;border-top:1px solid #a0a0a0;border-left:1px solid #a0a0a0;border-right:1px solid #fff;border-bottom:1px solid #fff;box-shadow:inset 1px 1px 0 #696969,inset -1px -1px 0 #e3e3e3;font-size:11px;line-height:18px;padding-left:3px;white-space:nowrap}
.dd{position:absolute;right:0;top:1px;width:17px;height:17px;background:#f0f0f0;border-top:1px solid #e3e3e3;border-left:1px solid #e3e3e3;border-right:1px solid #696969;border-bottom:1px solid #696969;box-shadow:inset -1px -1px 0 #a0a0a0,inset 1px 1px 0 #fff}
.dd:after{content:"";position:absolute;left:4px;top:6px;border-left:4px solid transparent;border-right:4px solid transparent;border-top:4px solid #a0a0a0}
</style>
<div class="cb" style="left:116px;top:115px;width:144px;height:20px;color:#6d6d6d">COM3<div class="dd"></div></div>
<div class="b3" style="left:116px;top:155px;width:75px;height:25px">Connect</div>
<div class="b3" style="left:204px;top:155px;width:75px;height:25px">Disconnecct</div>
<div class="b3" style="left:116px;top:195px;width:75px;height:25px">Manual ON</div>
<div class="b3" style="left:204px;top:195px;width:75px;height:25px">Manual OFF</div>
<div class="cb" style="left:116px;top:231px;width:144px;height:20px;color:#000">Free walk<div class="dd"></div></div>
<div class="b3" style="left:116px;top:259px;width:75px;height:25px">Robo ON</div>
<div class="b3 en" style="left:204px;top:259px;width:75px;height:25px">Robo OFF</div>

<!-- radar -->
<svg class="a" style="left:110px;top:285px" width="175" height="145" viewBox="110 285 175 145" shape-rendering="crispEdges">
<path d="M116 371A80 80 0 0 1 276 371Z" fill="#000"/>
<rect x="180" y="371" width="30" height="52" fill="#000"/>
<rect x="183" y="371" width="24" height="52" fill="#1e6b14"/>
<rect x="192" y="373" width="6" height="2" fill="#000"/>
<path d="M177 293L196.5 370" stroke="#7be38f" stroke-width="1" shape-rendering="auto"/>
<g fill="#6ee08a"><rect x="169" y="365" width="3" height="3"/><rect x="174" y="356" width="3" height="3"/><rect x="174" y="368" width="3" height="3"/><rect x="175" y="362" width="3" height="3"/><rect x="178" y="359" width="3" height="3"/><rect x="180" y="356" width="3" height="3"/><rect x="182" y="354" width="3" height="3"/><rect x="184" y="353" width="3" height="3"/><rect x="186" y="352" width="3" height="3"/><rect x="190" y="351" width="3" height="3"/><rect x="192" y="352" width="3" height="3"/><rect x="194" y="352" width="3" height="3"/><rect x="197" y="352" width="3" height="3"/><rect x="200" y="350" width="3" height="3"/><rect x="202" y="350" width="3" height="3"/><rect x="205" y="350" width="3" height="3"/><rect x="204" y="342" width="3" height="3"/><rect x="208" y="352" width="3" height="3"/><rect x="210" y="356" width="3" height="3"/><rect x="212" y="358" width="3" height="3"/><rect x="214" y="362" width="3" height="3"/><rect x="217" y="356" width="3" height="3"/><rect x="216" y="364" width="3" height="3"/><rect x="218" y="366" width="3" height="3"/><rect x="219" y="368" width="3" height="3"/></g>
</svg>
<!-- camera image -->
<svg class="a" style="left:300px;top:107px" width="320" height="240" viewBox="0 0 320 240">
<filter id="nz" x="0" y="0" width="100%" height="100%" color-interpolation-filters="sRGB">
<feTurbulence type="fractalNoise" baseFrequency="0.42 0.9" numOctaves="2" seed="3"/>
<feColorMatrix type="matrix" values="2.8 0 0 0 -1.1  2.8 0 0 0 -1.1  2.8 0 0 0 -1.1  0 0 0 0 1"/>
</filter>
<rect width="320" height="210" fill="#000"/>
<rect width="320" height="210" fill="#fff" filter="url(#nz)"/>
<rect y="210" width="320" height="30" fill="#000"/><rect x="130" y="209" width="30" height="1" fill="#3c8c3c"/>
<g fill="#c42628">
<rect x="160" y="105" width="2" height="11"/><rect x="160" y="124" width="2" height="12"/>
<rect x="144" y="119" width="12" height="2"/><rect x="165" y="119" width="11" height="2"/>
</g>
</svg>
<!-- scrollbars -->
<style>
.sb{position:absolute;background-color:#f4f4f4;background-image:linear-gradient(45deg,#fff 25%,transparent 25%,transparent 75%,#fff 75%),linear-gradient(45deg,#fff 25%,transparent 25%,transparent 75%,#fff 75%);background-size:2px 2px;background-position:0 0,1px 1px}
.sbtn{position:absolute;width:18px;height:18px;background:#f0f0f0;border-top:1px solid #e3e3e3;border-left:1px solid #e3e3e3;border-right:1px solid #696969;border-bottom:1px solid #696969;box-shadow:inset -1px -1px 0 #a0a0a0,inset 1px 1px 0 #fff}
</style>
<div class="sb" style="left:627px;top:106px;width:18px;height:242px;border-left:1px solid #a0a0a0"></div>
<div class="sbtn" style="left:627px;top:106px;height:17px"><div class="a" style="left:4px;top:5px;border-left:4px solid transparent;border-right:4px solid transparent;border-bottom:4px solid #a0a0a0"></div></div>
<div class="sbtn" style="left:627px;top:331px;height:17px"><div class="a" style="left:4px;top:5px;border-left:4px solid transparent;border-right:4px solid transparent;border-top:4px solid #a0a0a0"></div></div>
<div class="sb" style="left:300px;top:354px;width:321px;height:18px;border-top:1px solid #a0a0a0"></div>
<div class="sbtn" style="left:300px;top:354px;width:17px"><div class="a" style="left:5px;top:4px;border-top:4px solid transparent;border-bottom:4px solid transparent;border-right:4px solid #a0a0a0"></div></div>
<div class="sbtn" style="left:604px;top:354px;width:17px"><div class="a" style="left:6px;top:4px;border-top:4px solid transparent;border-bottom:4px solid transparent;border-left:4px solid #a0a0a0"></div></div>
<div class="sbtn" style="left:627px;top:354px"><div class="a" style="left:4px;top:8px;width:7px;height:1px;background:#a0a0a0"></div><div class="a" style="left:7px;top:5px;width:1px;height:7px;background:#a0a0a0"></div></div>
<!-- checkboxes -->
<style>
.ck{position:absolute;width:13px;height:13px;background:#f0f0f0;border-top:1px solid #a0a0a0;border-left:1px solid #a0a0a0;border-right:1px solid #fff;border-bottom:1px solid #fff;box-shadow:inset 1px 1px 0 #696969,inset -1px -1px 0 #e3e3e3}
.lbl{position:absolute;font-size:11px;color:#a0a0a0;white-space:nowrap}
</style>
<div class="ck" style="left:378px;top:381px"></div><div class="lbl" style="left:396px;top:380px">Cam</div>
<div class="ck" style="left:428px;top:381px"></div><div class="lbl" style="left:446px;top:380px">Boost</div>
<div class="ck" style="left:484px;top:381px"></div><div class="lbl" style="left:502px;top:380px">Compass</div>
<!-- arrow pad -->
<div class="b3" style="left:396px;top:403px;width:40px;height:24px"></div>
<div class="b3" style="left:436px;top:403px;width:40px;height:24px"></div>
<div class="b3" style="left:476px;top:403px;width:40px;height:24px"></div>
<div class="b3" style="left:396px;top:427px;width:40px;height:24px"></div>
<div class="b3" style="left:436px;top:427px;width:40px;height:24px"></div>
<div class="b3" style="left:476px;top:427px;width:40px;height:24px"></div>
<svg class="a" style="left:396px;top:403px" width="120" height="48" viewBox="396 403 120 48">
<g fill="none" stroke="#9a9a9a" stroke-width="1">
<path d="M418 411.5L414.5 415.5 418 419.5M418 436.5L414.5 440 418 443.5"/>
<path d="M494 411.5L497.5 415.5 494 419.5M494 436.5L497.5 440 494 443.5"/>
<path d="M454 411.5L456.5 409 459 411.5"/>
<path d="M454 437L456.5 442.5 459 437"/>
</g>
</svg>
<!-- status bar -->
<div class="a" style="left:100px;top:460px;width:552px;height:1px;background:#a0a0a0"></div>
<div class="a" style="left:100px;top:461px;width:552px;height:1px;background:#fff"></div>
<div class="a" style="left:102px;top:467px;font-size:12px;color:#1a1a1a">Work...</div>
</body></html>
